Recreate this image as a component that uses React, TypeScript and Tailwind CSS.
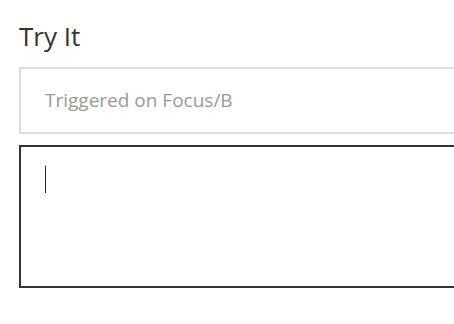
import React from "react";

export default function App() {
  return (
    <div
      className="w-[454px] h-[324px] overflow-hidden bg-white pl-[19px] pt-[19px]"
      style={{ fontFamily: '"Open Sans", sans-serif' }}
    >
      <h2 className="text-[26px] leading-[34px] text-[#333] font-normal">Try It</h2>
      <div className="mt-[14px] w-[520px] h-[67px] border-2 border-[#ddd] flex items-center pl-[24px]">
        <span className="text-[19px] text-[#999] leading-none">Triggered on Focus/B</span>
      </div>
      <div className="mt-[11px] w-[520px] h-[143px] border-2 border-[#333] pl-[24px] pt-[19px]">
        <div className="w-px h-[27px] bg-[#222]" />
      </div>
    </div>
  );
}
